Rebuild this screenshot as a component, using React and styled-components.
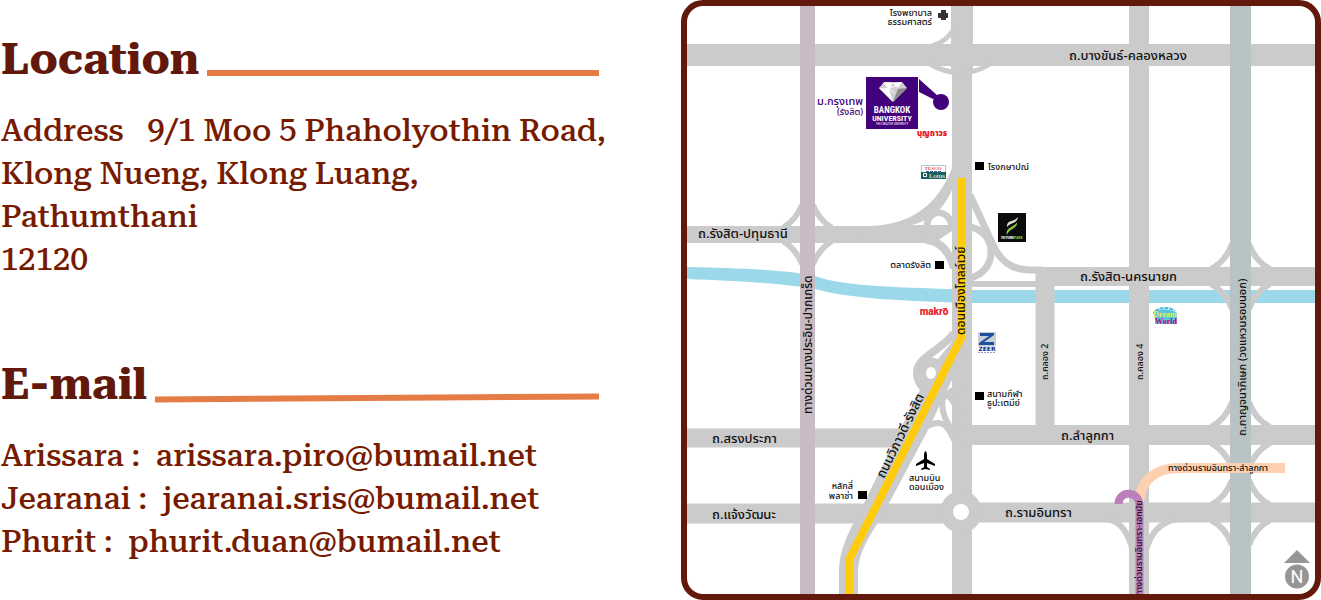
import React from "react";
import styled, { createGlobalStyle } from "styled-components";

const GlobalStyle = createGlobalStyle`
  *, *::before, *::after { box-sizing: border-box; }
  body {
    margin: 0;
    background: #fff;
    color: #761a00;
    font-family: "Roboto Slab", "Roboto Serif", "DejaVu Serif", serif;
    font-variant-numeric: lining-nums;
  }
`;

const Page = styled.main`
  display: grid;
  grid-template-columns: minmax(0, 598fr) minmax(0, 640fr);
  column-gap: 82px;
  align-items: start;
  padding-left: 1px;
`;

const Contact = styled.div`
  display: flex;
  flex-direction: column;
  gap: 72px;
  padding-top: 28px;
`;

const Section = styled.section`
  display: flex;
  flex-direction: column;
  gap: 19px;
`;

const HeadingRow = styled.div`
  display: flex;
  align-items: flex-end;
  gap: 8px;
`;

const Heading = styled.h2`
  margin: 0;
  color: #62180b;
  font-size: 44px;
  line-height: 62px;
  font-weight: 700;
`;

const Rule = styled.span`
  flex: 1;
  height: 6px;
  margin-bottom: 14px;
  background: #e57b45;
  transform: skewY(${(p) => p.$slant || 0}deg);
`;

const Address = styled.address`
  font-size: 31px;
  line-height: 43px;
  font-weight: 500;
  font-style: normal;
  white-space: pre;
`;

const People = styled.ul`
  margin: 0;
  padding: 0;
  list-style: none;
  font-size: 31px;
  line-height: 43px;
  font-weight: 500;
`;

const Person = styled.li`
  white-space: pre-wrap;
`;

const MailLink = styled.a`
  color: inherit;
  text-decoration: none;
`;

const MapFrame = styled.figure`
  margin: 0;
  border: 6px solid #62180b;
  border-radius: 22px;
  overflow: hidden;
  background: #fff;
`;

const MapDrawing = styled.svg`
  display: block;
  width: 100%;
  height: auto;
`;

const Road = styled.path`
  fill: none;
  stroke: ${(p) => p.$color || "#cbcbcb"};
  stroke-width: ${(p) => p.$w || 5}px;
`;

const Label = styled.text`
  font-family: "Noto Sans Thai", "Noto Sans", sans-serif;
  font-size: ${(p) => p.$size || 13}px;
  font-weight: ${(p) => p.$weight || 500};
  fill: ${(p) => p.$color || "#111"};
  text-anchor: ${(p) => p.$anchor || "start"};
`;

const Brand = styled.text`
  font-family: ${(p) => p.$font || '"Roboto Condensed", "Roboto"'}, sans-serif;
  font-size: ${(p) => p.$size}px;
  font-weight: ${(p) => p.$weight || 700};
  fill: ${(p) => p.$color || "#fff"};
  text-anchor: middle;
`;

const people = [
  ["Arissara", "arissara.piro@bumail.net"],
  ["Jearanai", "jearanai.sris@bumail.net"],
  ["Phurit", "phurit.duan@bumail.net"],
];

/* Slip roads that round off the corners of a crossing. */
function Ramps({ left, right, top, bottom, reach = 19, rise = 23 }) {
  const corners = [
    `M${left - reach} ${top + 2} Q${left - 4} ${top - 6} ${left + 2} ${top - rise}`,
    `M${right + reach} ${top + 2} Q${right + 4} ${top - 6} ${right - 2} ${top - rise}`,
    `M${left - reach} ${bottom - 2} Q${left - 4} ${bottom + 6} ${left + 2} ${bottom + rise}`,
    `M${right + reach} ${bottom - 2} Q${right + 4} ${bottom + 6} ${right - 2} ${bottom + rise}`,
  ];
  return corners.map((d) => <Road key={d} d={d} $w={6} />);
}

const landmarks = [
  [975, 162],
  [935, 261],
  [975, 392],
  [858, 491],
];

const roadNames = [
  ["ถ.บางขันธ์-คลองหลวง", 1069, 60],
  ["ถ.รังสิต-ปทุมธานี", 698, 238],
  ["ถ.รังสิต-นครนายก", 1080, 281],
  ["ถ.ลำลูกกา", 1061, 440],
  ["ถ.สรงประภา", 712, 443],
  ["ถ.แจ้งวัฒนะ", 712, 519],
  ["ถ.รามอินทรา", 1005, 517],
];

function Roads() {
  return (
    <g>
      <Ramps left={800} right={815} top={226} bottom={243} reach={17} rise={21} />
      <path fill="#9bd8e9" d="M687 267 C740 268 790 270 815 276 C845 287 900 287 972 290 H1315 V303 H972 C900 301 845 298 815 289 C790 284 740 281 687 279 Z" />
      <Ramps left={1230} right={1251} top={267} bottom={286} />
      <Ramps left={1230} right={1251} top={425} bottom={445} />
      <Ramps left={1230} right={1251} top={503} bottom={522} />

      <Road d="M687 55 H1315" $w={22} />
      <Road d="M687 234.500 H930" $w={17} />
      <Road d="M1040 276.500 H1315" $w={19} />
      <Road d="M687 438 H905" $w={19} />
      <Road d="M972 435 H1315" $w={20} />
      <Road d="M687 513.500 H950" $w={20} />
      <Road d="M972 512.500 H1315" $w={20} />
      <Road d="M962 6 V70" $w={22} />
      <Road d="M962 66 V594" $w={20} />
      <Road d="M1045 267 V430" $w={19} />
      <Road d="M1139 6 V594" $w={20} />

      <Road d="M932 46 Q948 41 955 27 M930 64 Q961 82 990 64" />

      <path fill="#cbcbcb" d="M866 226 C912 226 938 204 952 168 V190 C942 212 930 220 912 225 L952 225 V229 L940 243 H860 Z" />
      <Road d="M927 227 C927 207 951 209 952 228 C952 238 944 242 934 243" $w={7} />
      <path fill="#fff" d="M931 225 C932 213 946 214 948 225 Z" />
      <path fill="#fff" d="M937 241 L952 231 V256 Q946 244 937 241 Z" />
      <Road d="M926 240 Q946 241 954 268" $w={8} />
      <Road d="M970 227 C998 232 998 272 970 278" $w={7} />
      <Road d="M970 195 L993 245 Q1004 270 1030 270 H1042" $w={7} />
      <Road d="M970 284 H1036" $w={6} />

      <path fill="#cbcbcb" d="M952 330 H968 L960 364 L948 388 L926 434 L889 503 C876 530 859 545 858 572 V594 H839 V572 C839 545 854 523 864 503 L897 436 L932 366 L952 342 Z" />
      <Road d="M954 333 C944 349 916 357 917 373 C917 382 922 388 930 394" $w={8} />
      <Road d="M922 364 C934 357 943 364 941 374" $w={7} />
      <path fill="#cbcbcb" d="M921 362 L936 361 L938 380 L928 394 L917 382 Z" />
      <ellipse cx="931" cy="373" rx="5" ry="6" fill="#fff" />
      <Road d="M942 400 Q950 388 962 388 M943 395 Q939 418 957 434 M946 394 Q958 402 962 430 M922 430 Q941 415 950 432 L958 447" $w={6} />

      <Road d="M1105 519 Q1126 520 1133 552 M1179 519 Q1152 522 1145 554" $w={6} />
      <circle cx="961" cy="512" r="21" fill="#cbcbcb" />
      <circle cx="961" cy="512" r="8" fill="#fff" />

      <Road d="M807.500 6 V594" $color="#c9bbc4" $w={15} />
      <Road d="M1240.500 6 V594" $color="#b7c3c5" $w={21} />
      <Road d="M1139 502 C1141 478 1158 468 1180 468 H1285" $color="#fdd0af" $w={10} />
      <Road d="M1118.500 504 C1118.500 490 1139.500 490 1139.500 506 V594" $color="#bb7fbb" $w={8} />
      <Road d="M961.500 178 V337 L849 560 V594" $color="#ffcb0c" $w={8} />
    </g>
  );
}

function UniversityLogo() {
  return (
    <g>
      <path fill="#43007b" d="M866 77 H918 V129 H866 Z M919 79 L938 96 L933 99 L919 92 Z" />
      <circle cx="941" cy="102" r="8" fill="#43007b" />
      <path fill="#cfcfcf" d="M884 82 H902 L907 88 L893 102 L879 88 Z" />
      <path fill="#fff" d="M884 82 L893 83 L889 89 Z M879 88 L889 89 L893 102 Z M893 83 L902 82 L898 88 Z" />
      <path fill="#8b8b8b" d="M898 89 L907 88 L893 102 Z" />
      <path stroke="#fff" strokeWidth="1" d="M883 83 L894 93 M889 82 V95 M882 90 L896 86" />
      <Brand x="892" y="113" $size={9}>BANGKOK</Brand>
      <Brand x="892" y="121" $size={8}>UNIVERSITY</Brand>
      <Brand x="892" y="125" $size={3} $weight={400}>THE CREATIVE UNIVERSITY</Brand>
    </g>
  );
}

function Shops() {
  return (
    <g>
      <Label x="932" y="136" $size={8} $weight={900} $color="#e8151b" $anchor="middle">บุญถาวร</Label>

      <path fill="#fff" stroke="#a9c7cd" d="M921.500 165.500 H945.500 V178.500 H921.500 Z" />
      <path fill="#17625f" d="M921 172 H946 V179 H921 Z" />
      <Brand x="933" y="170" $size={5} $color="#dc5a55" $font='"Liberation Serif"'>TESCO</Brand>
      <path stroke="#3a5ba5" strokeDasharray="3 1" d="M926 171.500 H941" />
      <path fill="none" stroke="#fff" d="M923.500 173.500 H926.500 V176.500 H923.500 Z" />
      <Brand x="937" y="178" $size={7} $weight={400} $font='"Liberation Serif"'>Lotus</Brand>

      <path fill="#0b0b0b" d="M998 213 H1026 V242 H998 Z" />
      <path fill="#d9dcd9" d="M1007 225 C1008 220 1014 222 1018 217 C1017 224 1011 222 1007 227 Z" />
      <path fill="#8dc63f" d="M1007 235 C1005 227 1015 227 1017 222 C1018 229 1009 228 1007 235 Z" />
      <Brand x="1012" y="239" $size={4}>
        FUTURE<tspan fill="#8dc63f">PARK</tspan>
      </Brand>

      <Brand x="934" y="315" $size={10} $weight={900} $color="#e8252b" $font='"Roboto"'>makro</Brand>
      <path stroke="#e8252b" d="M943 308.500 H947" />

      <path fill="#c9ced4" d="M978 332 H996 V346 H978 Z" />
      <path fill="#1d4f9c" d="M980 333 H994 V335 L984 342 H994 V345 H979 V343 L989 336 H980 Z" />
      <Brand x="987" y="351" $size={6} $color="#25286b" $font='"DejaVu Sans"'>ZEER</Brand>
      <path stroke="#9a9bc0" strokeDasharray="2 1" d="M978 352.500 H996" />

      <path fill="none" stroke="#4cb7dc" strokeWidth="2" strokeDasharray="4 1" d="M1155 311 Q1165 305 1175 311" />
      <path fill="#59c3dd" d="M1153 312 Q1165 306 1177 313 V324 H1155 V318 Z" />
      <Brand x="1165" y="317" $size={8} $color="#e9f04e" $font='"Liberation Serif"'>Dream</Brand>
      <Brand x="1166" y="324" $size={8} $color="#c2007c" $font='"Liberation Serif"'>World</Brand>
    </g>
  );
}

function Labels() {
  return (
    <g>
      {roadNames.map(([name, x, y]) => (
        <Label key={name} x={x} y={y}>{name}</Label>
      ))}
      <Label x="932" y="16" $size={9} $anchor="end">โรงพยาบาล</Label>
      <Label x="932" y="25" $size={9} $anchor="end">ธรรมศาสตร์</Label>
      <Label x="863" y="105" $size={11} $color="#43007b" $anchor="end">ม.กรุงเทพ</Label>
      <Label x="863" y="115" $size={9} $color="#43007b" $anchor="end">(รังสิต)</Label>
      <Label x="988" y="170" $size={9}>โรงกษาปณ์</Label>
      <Label x="931" y="268" $size={9} $anchor="end">ตลาดรังสิต</Label>
      <Label x="987" y="397" $size={9}>สนามกีฬา</Label>
      <Label x="987" y="406" $size={9}>ธูปะเตมีย์</Label>
      <Label x="909" y="481" $size={9}>สนามบิน</Label>
      <Label x="909" y="490" $size={9}>ดอนเมือง</Label>
      <Label x="853" y="489" $size={9} $anchor="end">หลักสี่</Label>
      <Label x="853" y="499" $size={9} $anchor="end">พลาซ่า</Label>
      <Label transform="translate(812 414) rotate(-90)" $size={12}>ทางด่วนบางประอิน-ปากเกร็ด</Label>
      <Label transform="translate(965 335) rotate(-90)" $size={12}>ดอนเมืองโทลล์เวย์</Label>
      <Label transform="translate(884 479) rotate(-64)">ถนนวิภาวดี-รังสิต</Label>
      <Label transform="translate(1048 380) rotate(-90)" $size={9}>ถ.คลอง 2</Label>
      <Label transform="translate(1143 380) rotate(-90)" $size={9}>ถ.คลอง 4</Label>
      <Label transform="translate(1246 436) rotate(-90)" $size={11}>ถ.กาญจนาภิเษก (วงแหวนรอบนอก)</Label>
      <Label x="1168" y="471" $size={9}>ทางด่วนรามอินทรา-ลำลูกกา</Label>
      <Label transform="translate(1142 596) rotate(-90)" $size={9}>ทางด่วนรามอินทรา-เอกมัย</Label>
    </g>
  );
}

function Symbols() {
  return (
    <g>
      {landmarks.map(([x, y]) => (
        <rect key={`${x}-${y}`} x={x} y={y} width="9" height="8" fill="#000" />
      ))}
      <path fill="#333" d="M941 10 H946 V13 H948 V18 H946 V20 H941 V18 H938 V13 H941 Z" />
      <path d="M925.500 451 Q927 452 927 456 V459 L935 464 V466 L927 463 V467 L930 469 V470 L925.500 469 L921 470 V469 L924 467 V463 L916 466 V464 L924 459 V456 Q924 452 925.500 451 Z" />
      <path fill="#969696" d="M1297 550 L1310 563 H1284 Z" />
      <circle cx="1297" cy="576.500" r="12" fill="#969696" />
      <Brand x="1297" y="583" $size={18} $weight={400} $font='"Roboto"'>N</Brand>
    </g>
  );
}

export default function App() {
  return (
    <>
      <GlobalStyle />
      <Page>
        <Contact>
          <Section>
            <HeadingRow>
              <Heading>Location</Heading>
              <Rule />
            </HeadingRow>
            <Address>
              {"Address   9/1 Moo 5 Phaholyothin Road,"}
              <br />
              Klong Nueng, Klong Luang,
              <br />
              Pathumthani
              <br />
              12120
            </Address>
          </Section>
          <Section>
            <HeadingRow>
              <Heading>E-mail</Heading>
              <Rule $slant={-0.4} />
            </HeadingRow>
            <People>
              {people.map(([name, mail]) => (
                <Person key={mail}>
                  {`${name} :  `}
                  <MailLink href={`mailto:${mail}`}>{mail}</MailLink>
                </Person>
              ))}
            </People>
          </Section>
        </Contact>
        <MapFrame>
          <MapDrawing viewBox="687 6 628 588" role="img" aria-label="Map to Bangkok University">
            <Roads />
            <Labels />
            <Symbols />
            <UniversityLogo />
            <Shops />
          </MapDrawing>
        </MapFrame>
      </Page>
    </>
  );
}
